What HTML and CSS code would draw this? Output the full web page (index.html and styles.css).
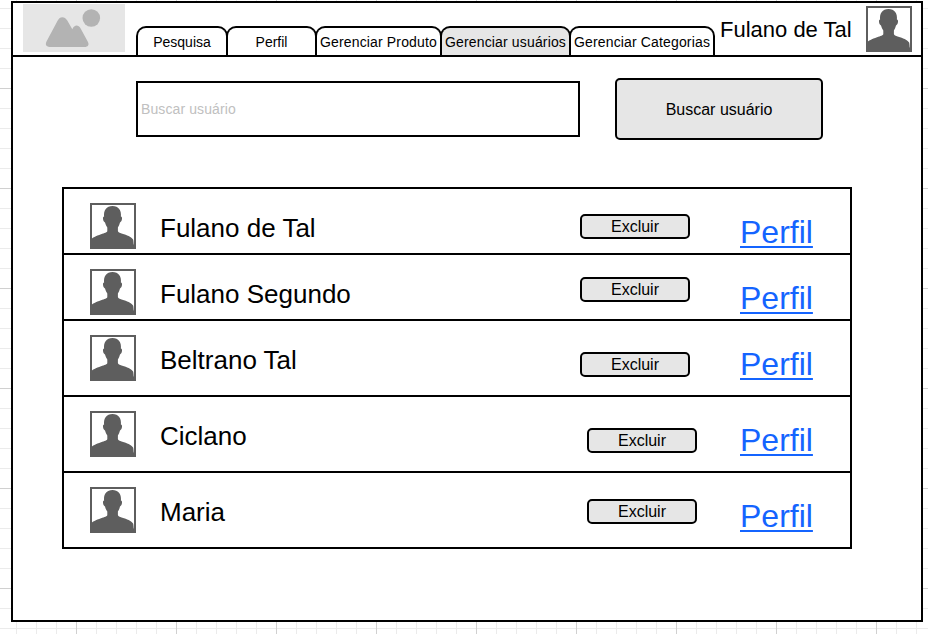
FILE: index.html
```
<!DOCTYPE html>
<html lang="pt-BR">
<head>
<meta charset="utf-8">
<title>Gerenciar usuários</title>
<link rel="stylesheet" href="styles.css">
</head>
<body>
<svg class="defs" width="0" height="0" aria-hidden="true">
  <symbol id="avatar" viewBox="0 0 46 46">
    <rect x="1" y="1" width="44" height="44" fill="#fff" stroke="#5e5e5e" stroke-width="2"/>
    <path fill="#5e5e5e" d="M1 45V36.800C2 34.600 6 33 11 31.200C14.500 30 17.300 29.400 17.300 28V24.600C16.300 23.200 15.500 21.400 15 19.400C13.800 19 13 17.200 13 15.500C13 14.300 13.300 13.700 14.100 13.600C13.400 7.500 16.500 3 22.500 3C28.500 3 31.600 7.500 30.900 13.600C31.700 13.700 32 14.300 32 15.500C32 17.200 31.200 19 30 19.400C29.500 21.400 28.800 23.200 27.900 24.600V28C27.900 29.400 30.500 30 34 31.200C38.500 32.700 42.300 34.600 43.100 36.600C43.500 38 43.500 39.500 43.700 41.500H45V45Z"/>
  </symbol>
</svg>
<main class="frame">
  <header class="header">
    <svg class="logo" viewBox="0 0 102 48" aria-label="Logo">
      <rect width="102" height="48" fill="#e6e6e6"/>
      <circle cx="68.300" cy="14" r="8.800" fill="#b3b3b3"/>
      <path fill="#b3b3b3" d="M23.500 37.500L34.700 16.500C36.700 12 41.800 12 44.300 16.500L49.300 25.200C51.300 20.700 55.300 20.500 57.500 24.300L64.700 37.500C66.600 40.800 65 43 61.500 43H28.500C23.500 43 21.800 41.200 23.500 37.500Z"/>
    </svg>
    <nav class="tabs">
      <a class="tab tab-search">Pesquisa</a>
      <a class="tab tab-profile">Perfil</a>
      <a class="tab tab-products">Gerenciar Produto</a>
      <a class="tab tab-users active">Gerenciar usuários</a>
      <a class="tab tab-categories">Gerenciar Categorias</a>
    </nav>
    <span class="current-user">Fulano de Tal</span>
    <svg class="avatar"><use href="#avatar"/></svg>
  </header>
  <form class="search">
    <input class="search-field" type="text" placeholder="Buscar usuário">
    <button class="search-button" type="button">Buscar usuário</button>
  </form>
  <ul class="users">
    <li class="user">
      <svg class="avatar"><use href="#avatar"/></svg>
      <span class="name">Fulano de Tal</span>
      <button class="delete" type="button">Excluir</button>
      <a class="profile" href="#">Perfil</a>
    </li>
    <li class="user second">
      <svg class="avatar"><use href="#avatar"/></svg>
      <span class="name">Fulano Segundo</span>
      <button class="delete" type="button">Excluir</button>
      <a class="profile" href="#">Perfil</a>
    </li>
    <li class="user tall">
      <svg class="avatar"><use href="#avatar"/></svg>
      <span class="name">Beltrano Tal</span>
      <button class="delete" type="button">Excluir</button>
      <a class="profile" href="#">Perfil</a>
    </li>
    <li class="user tall inset">
      <svg class="avatar"><use href="#avatar"/></svg>
      <span class="name">Ciclano</span>
      <button class="delete" type="button">Excluir</button>
      <a class="profile" href="#">Perfil</a>
    </li>
    <li class="user tall inset last">
      <svg class="avatar"><use href="#avatar"/></svg>
      <span class="name">Maria</span>
      <button class="delete" type="button">Excluir</button>
      <a class="profile" href="#">Perfil</a>
    </li>
  </ul>
</main>
</body>
</html>
```
FILE: styles.css
```
* {
  box-sizing: border-box;
}

body {
  margin: 0;
  height: 634px;
  padding: 1px 5px 12px 11px;
  overflow: hidden;
  font-family: "Liberation Sans", Arial, sans-serif;
  color: #000;
  background-color: #fff;
  background-image:
    linear-gradient(90deg, #d0d0d0 1px, transparent 1px),
    linear-gradient(#d0d0d0 1px, transparent 1px),
    linear-gradient(90deg, #ebebeb 1px, transparent 1px),
    linear-gradient(#ebebeb 1px, transparent 1px);
  background-size: 100px 100px, 100px 100px, 20px 20px, 20px 20px;
  background-position: 76px 0, 0 88px, 16px 0, 0 8px;
}

.defs {
  display: none;
}

.frame {
  width: 912px;
  height: 621px;
  border: 2px solid #000;
  background: #fff;
}

.header {
  display: flex;
  height: 54px;
  padding-left: 10px;
  border-bottom: 2px solid #000;
}

.logo {
  width: 102px;
  height: 48px;
  margin-top: 1px;
}

.tabs {
  display: flex;
  align-items: flex-end;
  margin-left: 11px;
}

.tab {
  height: 29px;
  border: 2px solid #000;
  border-bottom: 0;
  border-radius: 10px 10px 0 0;
  font-size: 14px;
  line-height: 28px;
  text-align: center;
  white-space: nowrap;
}

.tab + .tab {
  margin-left: -2px;
}

.tab-search { width: 92px; }
.tab-profile { width: 91px; }
.tab-products { width: 127px; letter-spacing: 0.15px; }
.tab-users { width: 131px; letter-spacing: 0.15px; }
.tab-categories { width: 146px; letter-spacing: 0.15px; }

.active {
  background: #e6e6e6;
}

.current-user {
  width: 146px;
  padding: 14px 0 0 5px;
  font-size: 22px;
  line-height: 26px;
  white-space: nowrap;
}

.avatar {
  display: block;
  width: 46px;
  height: 46px;
}

.header .avatar {
  margin: 3px 0 0 5px;
}

.search {
  display: flex;
  align-items: center;
  gap: 35px;
  margin: 21px 0 0 123px;
}

.search-field {
  width: 444px;
  height: 56px;
  padding: 0 3px;
  border: 2px solid #000;
  font: 14px "Liberation Sans", Arial, sans-serif;
  letter-spacing: 0.1px;
  background: #fff;
}

.search-field::placeholder {
  color: #c0c0c0;
  opacity: 1;
}

.search-button {
  width: 208px;
  height: 62px;
  padding: 2px 0 0;
  border: 2px solid #000;
  border-radius: 5px;
  font: 16px "Liberation Sans", Arial, sans-serif;
  color: #000;
  background: #e6e6e6;
}

.users {
  width: 790px;
  margin: 47px 0 0 49px;
  padding: 0;
  border: 2px solid #000;
  border-bottom: 0;
  list-style: none;
}

.user {
  display: grid;
  grid-template-columns: 70px 420px 160px auto;
  align-items: start;
  height: 66px;
  padding: 14px 0 0 26px;
  border-bottom: 2px solid #000;
}

.tall {
  height: 76px;
}

.name {
  margin-top: 10px;
  font-size: 26px;
  line-height: 30px;
}

.delete {
  width: 110px;
  height: 25px;
  margin-top: 11px;
  padding: 0;
  border: 2px solid #000;
  border-radius: 5px;
  font: 16px/18px "Liberation Sans", Arial, sans-serif;
  color: #000;
  background: #e6e6e6;
}

.second .delete { margin-top: 8px; }
.tall .delete { margin-top: 17px; }
.inset .delete { margin-left: 7px; }
.last .delete { margin-top: 12px; }

.profile {
  justify-self: start;
  margin-top: 11px;
  font-size: 32px;
  line-height: 36px;
  color: #1464ff;
  text-decoration: underline;
  text-decoration-thickness: 2px;
  text-underline-offset: 3px;
  text-decoration-skip-ink: none;
}
```
